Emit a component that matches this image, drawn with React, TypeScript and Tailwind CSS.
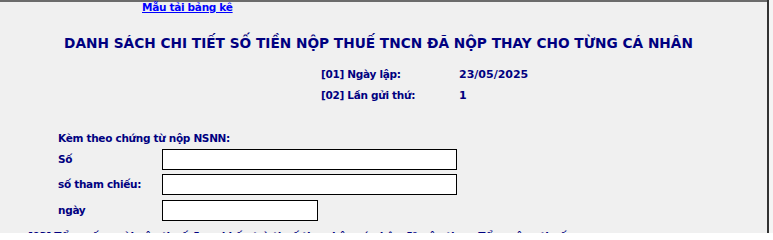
import React from 'react';

const font = { fontFamily: '"DejaVu Sans", Verdana, sans-serif' };

export default function App() {
  return (
    <div className="w-[773px] h-[233px] overflow-hidden bg-[#f0f0f0] flex" style={font}>
      <div className="w-[767px] h-full border-t-2 border-[#6b6b6b] flex flex-col">
        {/* link */}
        <div className="h-[12px] pl-[142px] flex items-center">
          <a href="#" className="text-[10.5px] tracking-[-0.3px] font-bold text-[#0000ff] underline leading-none">
            Mẫu tải bảng kê
          </a>
        </div>

        {/* title */}
        <div className="h-[51px] pt-[11px] flex items-start justify-center pr-[10px]">
          <h1 className="h-[40px] flex items-center text-[13.7px] font-bold text-[#000080] leading-none whitespace-nowrap">
            DANH SÁCH CHI TIẾT SỐ TIỀN NỘP THUẾ TNCN ĐÃ NỘP THAY CHO TỪNG CÁ NHÂN
          </h1>
        </div>

        {/* info */}
        <div className="pl-[321px] font-bold text-[#000080] leading-none">
          <div className="h-[21px] flex items-center">
            <span className="w-[138px] text-[10.5px] tracking-[-0.3px]">[01] Ngày lập:</span>
            <span className="text-[11px]">23/05/2025</span>
          </div>
          <div className="h-[21px] flex items-center">
            <span className="w-[138px] text-[10.5px] tracking-[-0.3px]">[02] Lần gửi thứ:</span>
            <span className="text-[11px]">1</span>
          </div>
        </div>

        {/* chứng từ */}
        <div className="pl-[58px] mt-[23px] text-[10.5px] tracking-[-0.3px] font-bold text-[#000080] leading-none">
          <div className="h-[20px] flex items-center">Kèm theo chứng từ nộp NSNN:</div>
          <div className="flex flex-col">
            <div className="h-[21px] flex items-center">
              <span className="w-[104px]">Số</span>
              <div className="w-[295px] h-[21px] bg-white border border-black" />
            </div>
            <div className="h-[21px] mt-[4px] flex items-center">
              <span className="w-[104px]">số tham chiếu:</span>
              <div className="w-[295px] h-[21px] bg-white border border-black" />
            </div>
            <div className="h-[21px] mt-[5px] flex items-center">
              <span className="w-[104px]">ngày</span>
              <div className="w-[156px] h-[21px] bg-white border border-black" />
            </div>
          </div>
        </div>

        {/* next line, cut off by the window */}
        <div className="pl-[28px] mt-[10px] text-[10.5px] tracking-[-0.3px] font-bold text-[#000080] leading-none whitespace-nowrap">
          [03] Tổng số người nộp thuế được khấu trừ thuế thu nhập cá nhân đã nộp thay: Tổng cộng thuế
        </div>
      </div>
      <div className="w-[2px] h-full bg-[#333333]" />
      <div className="flex-1 h-full bg-[#f4f4f4]" />
    </div>
  );
}
